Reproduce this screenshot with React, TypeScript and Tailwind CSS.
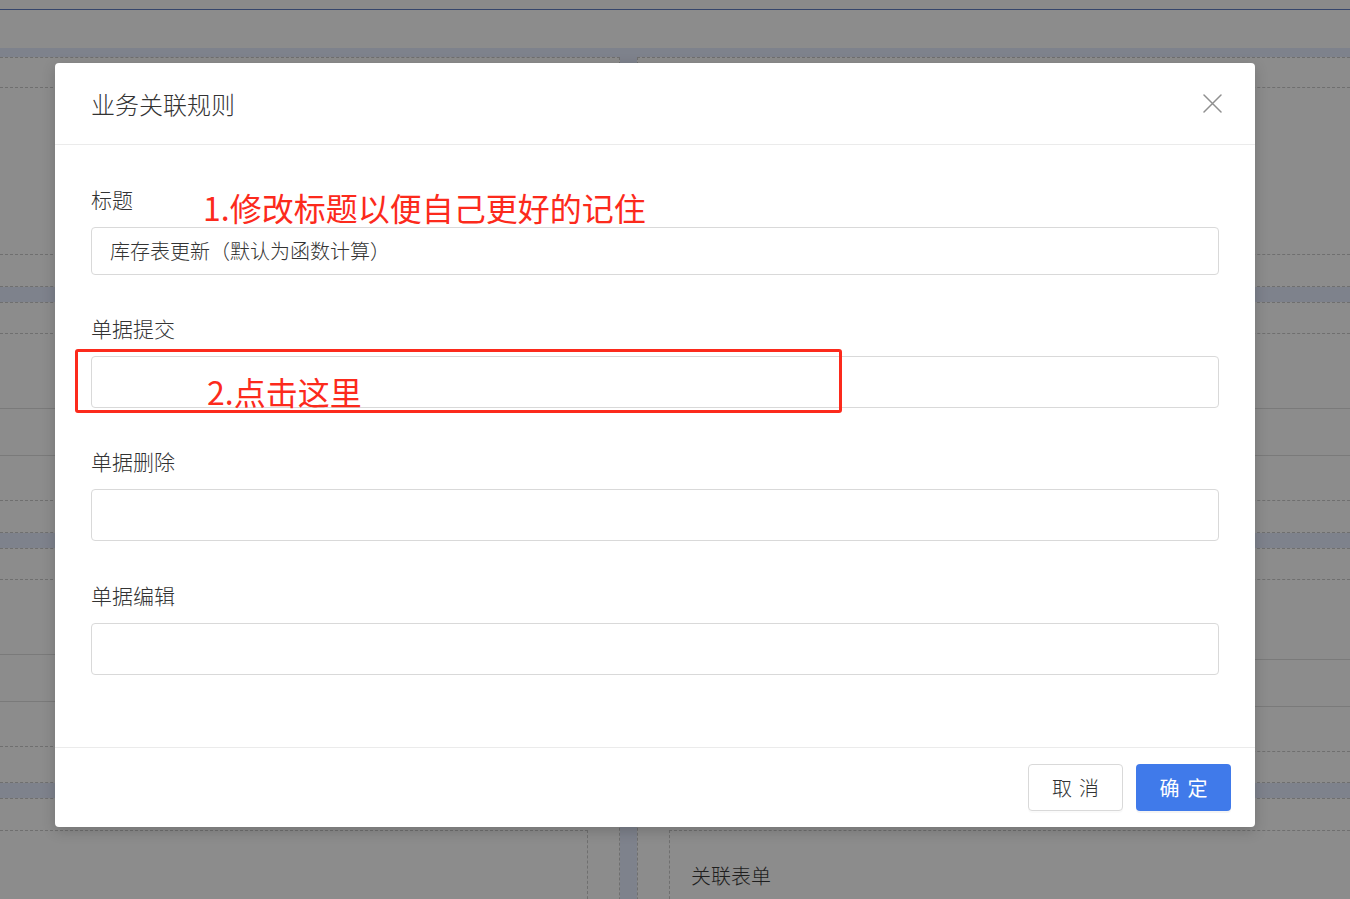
import React from "react";

type BoxSpec = {
  headerH: number;
  boxH: number;
  bottomH: number;
  rows?: { top: number; h: number };
};

function Card({ side, spec, last, children }: { side: "left" | "right"; spec: BoxSpec; last?: boolean; children?: React.ReactNode }) {
  const cardBorder =
    side === "left"
      ? "border-y border-r border-l-0 border-dashed border-[#6f6f6f]"
      : "border-y border-l border-r-0 border-dashed border-[#6f6f6f]";
  const boxBorder =
    side === "left"
      ? "mr-[31px] border-y border-r border-l-0 border-dashed border-[#6f6f6f]"
      : "ml-[31px] border-y border-l border-r-0 border-dashed border-[#6f6f6f]";
  return (
    <div className={`bg-[#8c8c8c] ${cardBorder} ${last ? "flex-1 border-b-0" : ""}`}>
      <div style={{ height: spec.headerH }} />
      <div className={`${boxBorder} ${last ? "border-b-0 h-[120px]" : ""}`} style={last ? undefined : { height: spec.boxH }}>
        {spec.rows ? (
          <>
            <div style={{ height: spec.rows.top }} />
            <div className="border-y border-solid border-[#7a7a7a]" style={{ height: spec.rows.h }} />
          </>
        ) : null}
        {children}
      </div>
      {!last && <div style={{ height: spec.bottomH }} />}
    </div>
  );
}

function Column({ side }: { side: "left" | "right" }) {
  const specs: BoxSpec[] =
    side === "left"
      ? [
          { headerH: 29, boxH: 168, bottomH: 31 },
          { headerH: 30, boxH: 168, bottomH: 31, rows: { top: 74, h: 48 } },
          { headerH: 30, boxH: 168, bottomH: 35, rows: { top: 74, h: 48 } },
          { headerH: 31, boxH: 168, bottomH: 31 },
        ]
      : [
          { headerH: 29, boxH: 168, bottomH: 31 },
          { headerH: 30, boxH: 168, bottomH: 31, rows: { top: 74, h: 48 } },
          { headerH: 30, boxH: 173, bottomH: 30, rows: { top: 79, h: 48 } },
          { headerH: 31, boxH: 168, bottomH: 31 },
        ];
  return (
    <div className={`flex flex-col gap-[15px] ${side === "left" ? "w-[620px]" : "flex-1"}`}>
      <Card side={side} spec={specs[0]} />
      <Card side={side} spec={specs[1]} />
      <Card side={side} spec={specs[2]} />
      <Card side={side} spec={specs[3]} last>
        {side === "right" ? (
          <div className="pl-[21px] pt-[30px] text-[20px] font-light leading-[30px] text-[#1e1e1e]">关联表单</div>
        ) : null}
      </Card>
    </div>
  );
}

function Field({ label, value, h }: { label: string; value?: string; h: number }) {
  return (
    <div>
      <div className="h-[30px] text-[21px] font-light leading-[30px] text-[#333333]">{label}</div>
      <div
        className="mt-[13px] flex items-center rounded-[4px] border border-[#d9d9d9] bg-white px-[18px] text-[20px] font-light text-[#333333]"
        style={{ height: h }}
      >
        {value}
      </div>
    </div>
  );
}

export default function App() {
  return (
    <div
      className="relative h-[899px] w-[1350px] overflow-hidden bg-[#8c8c8c]"
      style={{ fontFamily: '"Noto Sans CJK SC", "Noto Sans", "Liberation Sans", sans-serif' }}
    >
      {/* dimmed page behind */}
      <div className="flex h-full flex-col">
        <div className="h-[9px] shrink-0 bg-[#8a8a8a]" />
        <div className="h-px shrink-0 bg-[#35456b]" />
        <div className="h-[38px] shrink-0 bg-[#8c8c8c]" />
        <div className="flex flex-1 gap-[17px] bg-[#7e828c] pt-[9px]">
          <Column side="left" />
          <Column side="right" />
        </div>
      </div>

      {/* modal */}
      <div className="absolute left-[55px] top-[63px] flex h-[764px] w-[1200px] flex-col rounded-[4px] bg-white shadow-[0_4px_14px_rgba(0,0,0,0.18)]">
        <div className="flex h-[82px] shrink-0 items-center justify-between border-b border-[#ebebeb] pl-[36px] pr-[33px]">
          <div className="text-[24px] font-light leading-[32px] text-[#333333]">业务关联规则</div>
          <svg width="19" height="19" viewBox="0 0 19 19" fill="none">
            <path d="M1 1 L18 18 M18 1 L1 18" stroke="#8f8f8f" strokeWidth="1.5" strokeLinecap="round" />
          </svg>
        </div>
        <div className="flex flex-1 flex-col gap-[38px] px-[36px] pt-[39px]">
          <Field label="标题" value="库存表更新（默认为函数计算）" h={48} />
          <Field label="单据提交" h={52} />
          <Field label="单据删除" h={52} />
          <div className="mt-px">
            <Field label="单据编辑" h={52} />
          </div>
        </div>
        <div className="flex h-[80px] shrink-0 items-center justify-end gap-[13px] border-t border-[#ebebeb] pr-[24px]">
          <button className="flex h-[47px] w-[95px] items-center justify-center rounded-[4px] border border-[#d9d9d9] bg-white text-[20px] font-light text-[#333333] shadow-[0_2px_0_rgba(0,0,0,0.02)]">
            <span>取</span>
            <span className="ml-[7px]">消</span>
          </button>
          <button className="flex h-[47px] w-[95px] items-center justify-center rounded-[4px] bg-[#407aea] text-[20px] text-white shadow-[0_2px_0_rgba(0,0,0,0.045)]">
            <span>确</span>
            <span className="ml-[8px]">定</span>
          </button>
        </div>
      </div>

      {/* annotations */}
      <div className="absolute left-[203px] top-[189px] text-[32px] leading-[36px] text-[#fc2a1c]">
        1.修改标题以便自己更好的记住
      </div>
      <div className="absolute left-[75px] top-[349px] h-[64px] w-[767px] rounded-[3px] border-[3px] border-[#fc2a1c]" />
      <div className="absolute left-[207px] top-[373px] text-[32px] leading-[36px] text-[#fc2a1c]">2.点击这里</div>
    </div>
  );
}
